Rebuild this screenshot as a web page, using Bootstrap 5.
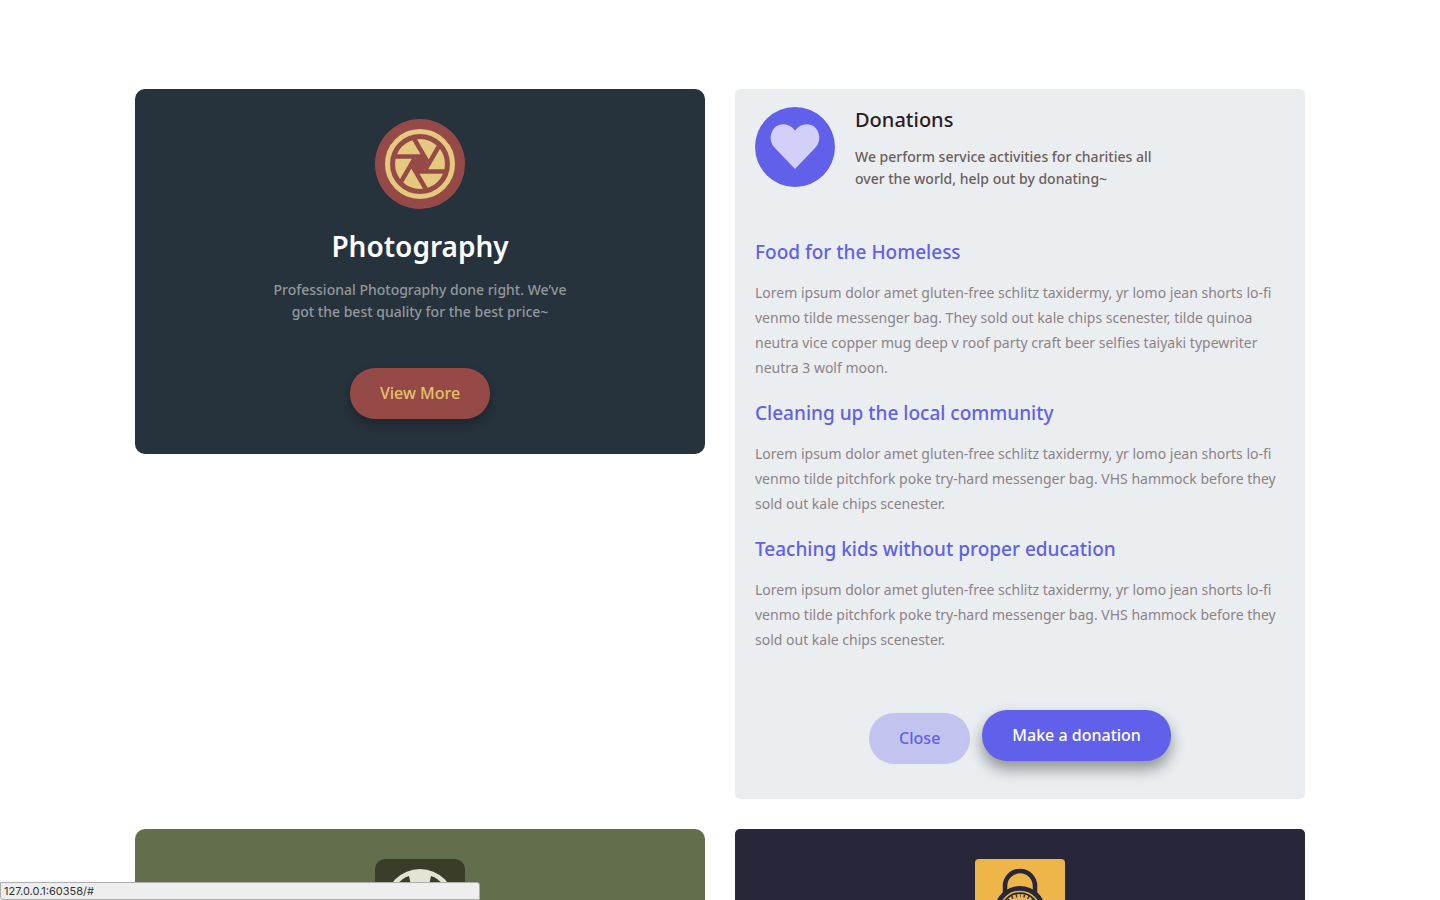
<!DOCTYPE html>
<html lang="en">
<head>
<meta charset="utf-8">
<meta name="viewport" content="width=device-width, initial-scale=1">
<title>Services</title>
<link href="https://cdn.jsdelivr.net/npm/bootstrap@5.3.0/dist/css/bootstrap.min.css" rel="stylesheet">
<style>
body { font-family: "Noto Sans", sans-serif; font-size: 14px; background: #fff; }
.page-wrap { max-width: 1200px; padding: 89px 15px 0; }
.tiles { --bs-gutter-x: 30px; --bs-gutter-y: 30px; }
.tile { border-radius: 10px; padding: 30px 20px 35px; }
.tile-photo { background: #26323c; color: #fff; }
.tile-give { background: #ebeef1; border-radius: 5px; padding: 18px 20px 35px; }
.tile-ball { background: #636e4d; }
.tile-lock { background: #272739; border-radius: 5px; }
.tile svg { display: block; }
.tile-title { font-size: 28px; line-height: 36px; font-weight: 600; margin: 19px 0 15px; }
.tile-text { font-size: 14px; line-height: 22px; max-width: 300px; margin: 0 auto 45px; font-weight: 500; color: #92989d; }
.pill { --bs-btn-padding-x: 30px; --bs-btn-padding-y: 13px; --bs-btn-font-size: 16px; --bs-btn-line-height: 25px; --bs-btn-border-width: 0; --bs-btn-border-radius: 25px; --bs-btn-font-weight: 500; }
.pill-view { --bs-btn-color: #e5c267; --bs-btn-bg: #964a48; --bs-btn-hover-color: #e5c267; --bs-btn-hover-bg: #964a48; box-shadow: 0 5px 10px rgba(0,0,0,.25); }
.pill-close { --bs-btn-color: #6060ea; --bs-btn-bg: #c3c3f0; --bs-btn-hover-color: #6060ea; --bs-btn-hover-bg: #c3c3f0; }
.pill-give { --bs-btn-color: #fff; --bs-btn-bg: #6060ea; --bs-btn-hover-color: #fff; --bs-btn-hover-bg: #6060ea; margin-bottom: 3px; box-shadow: 0 8px 15px rgba(0,0,0,.4); }
.give-head { gap: 20px; margin-bottom: 49px; }
.give-title { font-size: 20px; line-height: 26px; font-weight: 500; color: #2c1d1d; margin: 0 0 13px; }
.give-text { font-size: 14px; line-height: 22px; max-width: 300px; margin: 0; font-weight: 500; color: #6b5e5b; }
.cause-title { font-size: 19px; line-height: 26px; font-weight: 500; color: #6060ea; margin: 0 0 15px; }
.cause-text { font-size: 14px; line-height: 25px; color: #8b8386; margin: 0 0 20px; }
.give-actions { gap: 12px; margin-top: 58px; }
.link-status { width: 480px; height: 18px; background: #eee; border: 1px solid #acacac; border-radius: 0 3px 0 3px; padding-left: 3px; font: 11px/16px Inter, sans-serif; color: #333; }
</style>
</head>
<body>
<main class="container-fluid page-wrap">
  <div class="row tiles align-items-start">
    <div class="col-md-6">
      <section class="tile tile-photo text-center">
        <svg class="mx-auto" width="90" height="90" viewBox="0 0 90 90" aria-hidden="true">
          <circle cx="45" cy="45" r="45" fill="#964a48"/>
          <circle cx="45" cy="45" r="32.5" fill="none" stroke="#e5c97f" stroke-width="5"/>
          <circle cx="45" cy="45" r="25" fill="#e5c97f"/>
          <g stroke="#964a48" stroke-width="4.500">
            <path d="M18 37.5H47"/>
            <path d="M18 37.5H47" transform="rotate(60 45 45)"/>
            <path d="M18 37.5H47" transform="rotate(120 45 45)"/>
            <path d="M18 37.5H47" transform="rotate(180 45 45)"/>
            <path d="M18 37.5H47" transform="rotate(240 45 45)"/>
            <path d="M18 37.5H47" transform="rotate(300 45 45)"/>
          </g>
          <circle cx="45" cy="45" r="7" fill="#964a48"/>
        </svg>
        <h2 class="tile-title">Photography</h2>
        <p class="tile-text">Professional Photography done right. We’ve got the best quality for the best price~</p>
        <button type="button" class="btn pill pill-view">View More</button>
      </section>
    </div>
    <div class="col-md-6">
      <section class="tile tile-give">
        <header class="give-head d-flex align-items-start">
          <svg class="flex-shrink-0" width="80" height="80" viewBox="0 0 80 80" aria-hidden="true">
            <circle cx="40" cy="40" r="40" fill="#6060ea"/>
            <path d="M40 62L19.500 40.500C13.500 34 15 24 21 19.500C27 15.500 35 16.500 40 23.500C45 16.500 53 15.500 59 19.500C65 24 66.500 34 60.500 40.500Z" fill="#d2d0f8"/>
          </svg>
          <div>
            <h2 class="give-title">Donations</h2>
            <p class="give-text">We perform service activities for charities all over the world, help out by donating~</p>
          </div>
        </header>
        <h3 class="cause-title">Food for the Homeless</h3>
        <p class="cause-text">Lorem ipsum dolor amet gluten-free schlitz taxidermy, yr lomo jean shorts lo-fi venmo tilde messenger bag. They sold out kale chips scenester, tilde quinoa neutra vice copper mug deep v roof party craft beer selfies taiyaki typewriter neutra 3 wolf moon.</p>
        <h3 class="cause-title">Cleaning up the local community</h3>
        <p class="cause-text">Lorem ipsum dolor amet gluten-free schlitz taxidermy, yr lomo jean shorts lo-fi venmo tilde pitchfork poke try-hard messenger bag. VHS hammock before they sold out kale chips scenester.</p>
        <h3 class="cause-title">Teaching kids without proper education</h3>
        <p class="cause-text">Lorem ipsum dolor amet gluten-free schlitz taxidermy, yr lomo jean shorts lo-fi venmo tilde pitchfork poke try-hard messenger bag. VHS hammock before they sold out kale chips scenester.</p>
        <div class="give-actions d-flex justify-content-center align-items-end">
          <button type="button" class="btn pill pill-close">Close</button>
          <button type="button" class="btn pill pill-give">Make a donation</button>
        </div>
      </section>
    </div>
    <div class="col-md-6">
      <section class="tile tile-ball">
        <svg class="mx-auto" width="90" height="90" viewBox="0 0 90 90" aria-hidden="true">
          <rect width="90" height="90" rx="10" fill="#3a3d2a"/>
          <circle cx="45" cy="45" r="35" fill="#e3e4d5"/>
          <path d="M22 26Q27 19 34 17L36 26L29 36ZM68 26Q63 19 56 17L54 26L61 36ZM45 36L55 43L51 55H39L35 43Z" fill="#3a3d2a"/>
        </svg>
      </section>
    </div>
    <div class="col-md-6">
      <section class="tile tile-lock">
        <svg class="mx-auto" width="90" height="90" viewBox="0 0 90 90" aria-hidden="true">
          <rect width="90" height="90" rx="4" fill="#eeb549"/>
          <path d="M30 38V27a15 15 0 0 1 30 0V38" fill="none" stroke="#272739" stroke-width="4.500"/>
          <circle cx="45" cy="53" r="26" fill="#272739"/>
          <circle cx="45" cy="53" r="20.500" fill="none" stroke="#eeb549" stroke-width="1.500"/>
          <circle cx="45" cy="53" r="18" fill="#eeb549"/>
          <circle cx="45" cy="53" r="16.500" fill="none" stroke="#272739" stroke-width="3" stroke-dasharray="1.320 3" stroke-dashoffset="0.660" transform="rotate(-90 45 53)"/>
        </svg>
      </section>
    </div>
  </div>
</main>
<div class="link-status position-fixed bottom-0 start-0">127.0.0.1:60358/#</div>
<script src="https://cdn.jsdelivr.net/npm/bootstrap@5.3.0/dist/js/bootstrap.bundle.min.js"></script>
</body>
</html>
